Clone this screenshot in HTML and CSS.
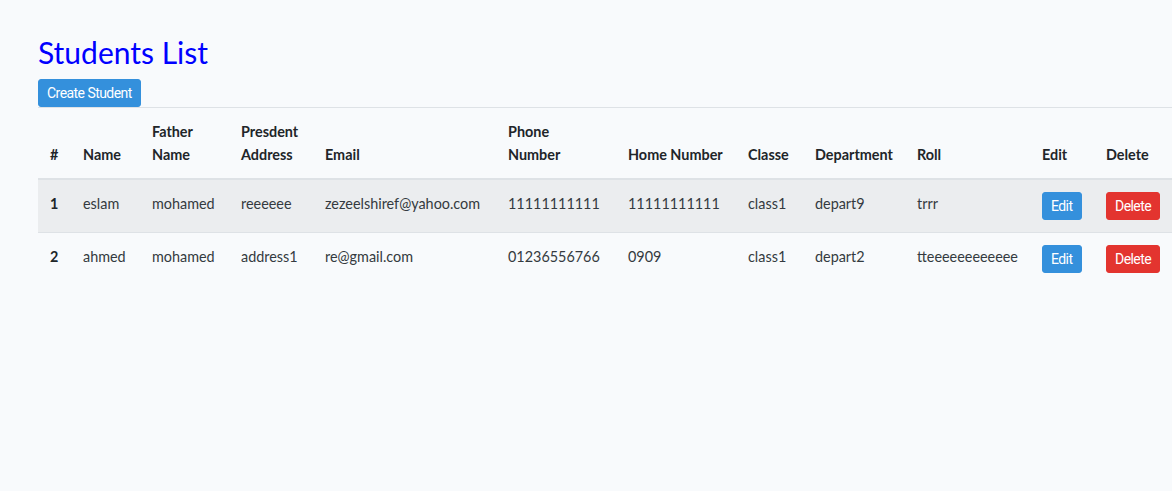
FILE: index.html
```html
<!DOCTYPE html>
<html lang="en">
<head>
<meta charset="utf-8">
<title>Students List</title>
<link rel="stylesheet" href="styles.css">
</head>
<body>
<main class="page">
  <h1 class="title">Students List</h1>
  <a class="btn btn-primary btn-create" href="#">Create Student</a>
  <table class="students">
    <colgroup>
      <col class="c-id"><col class="c-name"><col class="c-father"><col class="c-addr"><col class="c-email"><col class="c-phone"><col class="c-home"><col class="c-class"><col class="c-dept"><col class="c-roll"><col class="c-edit"><col class="c-del">
    </colgroup>
    <thead>
      <tr>
        <th>#</th>
        <th>Name</th>
        <th>Father<br>Name</th>
        <th>Presdent<br>Address</th>
        <th>Email</th>
        <th>Phone<br>Number</th>
        <th>Home Number</th>
        <th>Classe</th>
        <th>Department</th>
        <th>Roll</th>
        <th>Edit</th>
        <th>Delete</th>
      </tr>
    </thead>
    <tbody>
      <tr class="striped">
        <th class="rownum">1</th>
        <td>eslam</td>
        <td>mohamed</td>
        <td>reeeeee</td>
        <td>zezeelshiref@yahoo.com</td>
        <td>11111111111</td>
        <td>11111111111</td>
        <td>class1</td>
        <td>depart9</td>
        <td>trrr</td>
        <td><a class="btn btn-primary" href="#">Edit</a></td>
        <td><button class="btn btn-danger" type="button">Delete</button></td>
      </tr>
      <tr>
        <th class="rownum">2</th>
        <td>ahmed</td>
        <td>mohamed</td>
        <td>address1</td>
        <td>re@gmail.com</td>
        <td>01236556766</td>
        <td>0909</td>
        <td>class1</td>
        <td>depart2</td>
        <td>tteeeeeeeeeeee</td>
        <td><a class="btn btn-primary" href="#">Edit</a></td>
        <td><button class="btn btn-danger" type="button">Delete</button></td>
      </tr>
    </tbody>
  </table>
</main>
</body>
</html>
```

FILE: styles.css
```css
html, body {
  margin: 0;
  padding: 0;
}
body {
  background: #f8fafc;
  color: #212529;
  font-family: Lato, "Noto Sans", sans-serif;
  font-size: 14.4px;
  line-height: 1.6;
  overflow: hidden;
}
.page {
  padding: 34px 0 0 38px;
}
.title {
  margin: 0 0 9px 0;
  font-family: Lato, "Noto Sans", sans-serif;
  font-weight: 400;
  font-size: 30px;
  line-height: 1.2;
  color: #0000ff;
}
.btn {
  display: inline-block;
  box-sizing: border-box;
  height: 28px;
  padding: 0 8px;
  border: 1px solid transparent;
  border-radius: 3px;
  font-family: Roboto, "Liberation Sans", sans-serif;
  font-size: 14px;
  letter-spacing: -0.55px;
  line-height: 26px;
  color: #fff;
  text-decoration: none;
  vertical-align: top;
  cursor: pointer;
}
.btn-primary {
  background: #3490dc;
  border-color: #3490dc;
}
.btn-danger {
  background: #e3342f;
  border-color: #e3342f;
}
.btn-create {
  display: block;
  width: fit-content;
}
.students {
  border-collapse: collapse;
  table-layout: fixed;
  width: 1134px;
}
.c-id { width: 33px; }
.c-name { width: 69px; }
.c-father { width: 89px; }
.c-addr { width: 84px; }
.c-email { width: 183px; }
.c-phone { width: 120px; }
.c-home { width: 120px; }
.c-class { width: 67px; }
.c-dept { width: 102px; }
.c-roll { width: 125px; }
.c-edit { width: 64px; }
.c-del { width: 78px; }
.students th,
.students td {
  padding: 12px;
  text-align: left;
  vertical-align: top;
  border-top: 1px solid #dee2e6;
  white-space: nowrap;
  overflow: visible;
}
.students thead th {
  vertical-align: bottom;
  border-bottom: 2px solid #dee2e6;
  font-weight: 700;
}
.students tbody th {
  font-weight: 700;
}
.students tr.striped {
  background: rgba(0, 0, 0, 0.05);
}
.students td {
  color: #343a40;
}
```
